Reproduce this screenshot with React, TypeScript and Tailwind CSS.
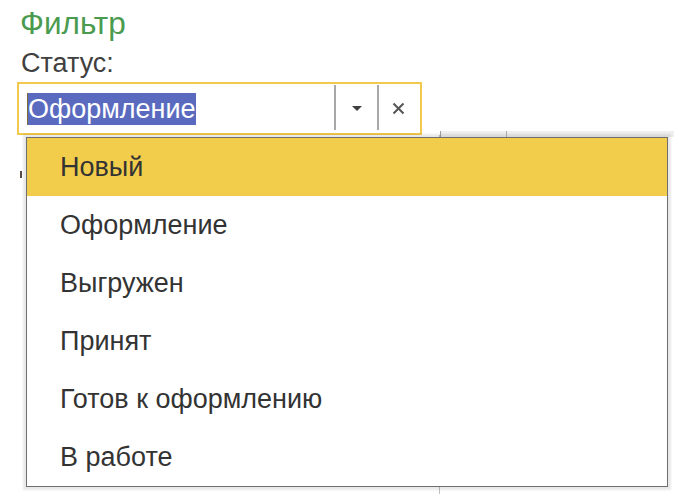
import React from 'react';

const items = ['Новый', 'Оформление', 'Выгружен', 'Принят', 'Готов к оформлению', 'В работе'];

export default function App() {
  return (
    <div className="relative w-[674px] h-[494px] overflow-hidden bg-white font-['Liberation_Sans',Arial,sans-serif]">
      <div className="pl-[17px] pt-[6px]">
        <h1 className="pl-[3px] text-[31.5px] leading-[34px] text-[#4a9b4f] font-normal">Фильтр</h1>
        <div className="mt-[8px] pl-[4px] text-[27px] leading-[31px] text-[#404040]">Статус:</div>

        <div className="mt-[3px] flex">
          <div className="w-[405px] h-[53px] border-2 border-[#f2c94c] flex items-center">
            <div className="w-[315px] pl-[8px] flex items-center">
              <span className="w-[1px] h-[32px] bg-[#7d6d35]" />
              <span className="bg-[#5a6bbf] text-white text-[27px] leading-[32px]">Оформление</span>
            </div>
            <div className="w-[2px] h-[45px] mt-[-2px] bg-[#a8a8a8]" />
            <div className="w-[41px] flex items-center justify-center">
              <span className="w-0 h-0 border-l-[5px] border-r-[5px] border-t-[5px] border-l-transparent border-r-transparent border-t-[#3f3f3f]" />
            </div>
            <div className="w-[2px] h-[45px] mt-[-2px] bg-[#a8a8a8]" />
            <div className="flex-1 flex items-center justify-center pr-[2px]">
              <svg width="13" height="13" viewBox="0 0 13 13">
                <path d="M1.5 1.5 L11.5 11.5 M11.5 1.5 L1.5 11.5" stroke="#555" strokeWidth="2" />
              </svg>
            </div>
          </div>
          <div className="flex-1 self-end mb-[-2px] ml-[18px] h-[6px] bg-[#efefef] border-l border-[#a0a0a0] flex">
            <div className="w-[66px] border-r border-[#b0b0b0]" />
          </div>
        </div>

        <div className="flex h-[400px]">
          <div className="w-[423px] border-r border-[#c0c0c0]">
            <div className="mt-[36px] ml-[3px] w-[2px] h-[7px] bg-[#5a4a44]" />
          </div>
        </div>
      </div>

      <div className="absolute left-[26px] top-[137px] w-[642px] h-[350px] border border-[#6f6f6f] bg-white shadow-[0_0_2px_3px_rgba(0,0,0,0.09)]">
        {items.map((t, i) => (
          <div
            key={t}
            className={
              i === 0
                ? 'h-[58px] pl-[33px] text-[27px] leading-[58px] text-[#333333] bg-[#f2cd4c]'
                : 'h-[58px] pl-[33px] text-[27px] leading-[58px] text-[#333333]'
            }
          >
            {t}
          </div>
        ))}
      </div>
    </div>
  );
}
